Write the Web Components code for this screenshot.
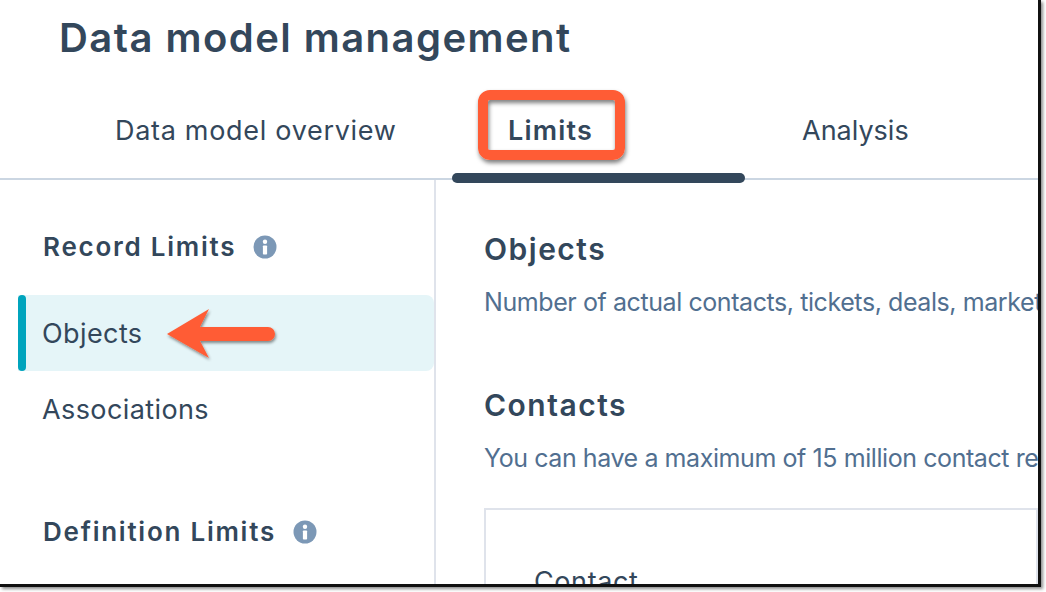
<!DOCTYPE html>
<html lang="en">
<head>
<meta charset="utf-8">
<title>Data model management</title>
<style>
  html, body { margin: 0; background: #fff; }
  body { font-family: "Inter", "Liberation Sans", sans-serif; color: #33475b; }
</style>
</head>
<body>
<data-model-page>
  <h-title slot="title">Data model management</h-title>
  <tab-bar slot="tabs">
    <tab-item style="--w:394px;--ls:0.7px">Data model overview</tab-item>
    <tab-item active style="--w:293px;--ls:1.2px">Limits</tab-item>
    <tab-item style="--w:220px;--ls:0">Analysis</tab-item>
  </tab-bar>
  <side-nav slot="side">
    <nav-heading>Record Limits</nav-heading>
    <nav-item active>Objects</nav-item>
    <nav-item>Associations</nav-item>
    <nav-heading second>Definition Limits</nav-heading>
  </side-nav>
  <limit-section slot="main" heading="Objects">Number of actual contacts, tickets, deals, marketing events, and other records you can have</limit-section>
  <limit-section slot="main" heading="Contacts" second>You can have a maximum of 15 million contact records in your account across all of your teams</limit-section>
  <limit-card slot="main">Contact</limit-card>
</data-model-page>

<script>
// page frame: white sheet with the dark screenshot edge on right and bottom
class DataModelPage extends HTMLElement {
  constructor() {
    super();
    this.attachShadow({ mode: 'open' });
    this.shadowRoot.innerHTML = `
      <style>
        :host { display: block; width: 1046px; height: 592px; }
        .sheet {
          position: relative;
          box-sizing: border-box;
          width: 1041px;
          height: 587px;
          background: #fff;
          border-right: 3px solid #111;
          border-bottom: 3px solid #111;
          box-shadow: 2px 2px 3px rgba(0, 0, 0, 0.45);
          overflow: hidden;
          display: flex;
          flex-direction: column;
        }
        .body { display: flex; flex: 1; min-height: 0; }
        .side { width: 434px; flex: none; border-right: 2px solid #dfe3eb; }
        .main { flex: 1; min-width: 0; padding: 0 0 0 49px; overflow: hidden; }
        .callout {
          position: absolute;
          left: 478px;
          top: 90px;
          width: 147px;
          height: 70px;
          box-sizing: border-box;
          border: 10px solid #ff5c35;
          border-radius: 12px;
          box-shadow: 1px 3px 4px rgba(0, 0, 0, 0.5), inset 1px 3px 4px rgba(0, 0, 0, 0.5);
        }
        .arrow { position: absolute; left: 164px; top: 304px; }
      </style>
      <div class="sheet">
        <slot name="title"></slot>
        <slot name="tabs"></slot>
        <div class="body">
          <div class="side"><slot name="side"></slot></div>
          <div class="main"><slot name="main"></slot></div>
        </div>
        <div class="callout"></div>
        <svg class="arrow" width="116" height="62" viewBox="0 0 116 62">
          <defs>
            <filter id="ds" x="-20%" y="-20%" width="140%" height="150%">
              <feDropShadow dx="1" dy="2" stdDeviation="1.5" flood-color="#000" flood-opacity="0.45"/>
            </filter>
          </defs>
          <path filter="url(#ds)" fill="#ff5c35" d="M3 30 L45 5 L36 23 L104 23 A7 7 0 0 1 104 37 L36 37 L45 54 Z"/>
        </svg>
      </div>`;
  }
}

class HTitle extends HTMLElement {
  constructor() {
    super();
    this.attachShadow({ mode: 'open' });
    this.shadowRoot.innerHTML = `
      <style>
        :host {
          display: block;
          height: 88px;
          padding: 13px 0 0 59px;
          box-sizing: border-box;
          font-size: 40px;
          line-height: 50px;
          font-weight: 600;
          color: #33475b;
          letter-spacing: 1.45px;
        }
      </style>
      <slot></slot>`;
  }
}

class TabBar extends HTMLElement {
  constructor() {
    super();
    this.attachShadow({ mode: 'open' });
    this.shadowRoot.innerHTML = `
      <style>
        :host {
          display: flex;
          height: 92px;
          box-sizing: border-box;
          padding-left: 58px;
          border-bottom: 2px solid #cbd6e2;
        }
      </style>
      <slot></slot>`;
  }
}

class TabItem extends HTMLElement {
  constructor() {
    super();
    this.attachShadow({ mode: 'open' });
    this.shadowRoot.innerHTML = `
      <style>
        :host {
          display: block;
          box-sizing: border-box;
          padding-left: 57px;
          position: relative;
          width: var(--w);
          height: 95px;
          font-size: 27px;
          line-height: 86px;
          letter-spacing: var(--ls);
          color: #33475b;
        }
        :host([active]) { font-weight: 600; padding-left: 56px; }
        :host([active])::after {
          content: '';
          position: absolute;
          left: 0;
          right: 0;
          bottom: 0;
          height: 10px;
          border-radius: 5px;
          background: #33475b;
        }
      </style>
      <slot></slot>`;
  }
}

class SideNav extends HTMLElement {
  constructor() {
    super();
    this.attachShadow({ mode: 'open' });
    this.shadowRoot.innerHTML = `
      <style>
        :host { display: block; padding: 49px 0 0 18px; }
      </style>
      <slot></slot>`;
  }
}

class NavHeading extends HTMLElement {
  constructor() {
    super();
    this.attachShadow({ mode: 'open' });
    this.shadowRoot.innerHTML = `
      <style>
        :host {
          display: flex;
          align-items: center;
          gap: 17px;
          height: 34px;
          margin: 0 0 32px 25px;
          font-size: 26px;
          font-weight: 600;
          letter-spacing: 1.75px;
          color: #33475b;
        }
        :host([second]) { margin-top: 67px; }
        svg { flex: none; position: relative; top: 1px; }
      </style>
      <slot></slot>
      <svg width="24" height="24" viewBox="0 0 24 24">
        <circle cx="12" cy="12" r="11.5" fill="#7c98b6"/>
        <circle cx="12" cy="6.7" r="2.2" fill="#fff"/>
        <rect x="9.9" y="10.5" width="4.2" height="9" rx="0.8" fill="#fff"/>
      </svg>`;
  }
}

class NavItem extends HTMLElement {
  constructor() {
    super();
    this.attachShadow({ mode: 'open' });
    this.shadowRoot.innerHTML = `
      <style>
        :host {
          display: flex;
          align-items: center;
          height: 76px;
          padding-left: 24px;
          position: relative;
          font-size: 27px;
          letter-spacing: 0.4px;
          color: #33475b;
          border-radius: 0 8px 8px 0;
        }
        :host([active]) { background: #e5f5f8; }
        :host([active])::before {
          content: '';
          position: absolute;
          left: 0;
          top: 0;
          bottom: 0;
          width: 8px;
          border-radius: 4px;
          background: #00a4bd;
        }
      </style>
      <slot></slot>`;
  }
}

class LimitSection extends HTMLElement {
  constructor() {
    super();
    this.attachShadow({ mode: 'open' });
    this.shadowRoot.innerHTML = `
      <style>
        :host { display: block; padding-top: 50px; height: 106px; white-space: nowrap; margin-left: -1px; }
        :host([second]) { padding-top: 50px; height: 122px; }
        h2 {
          margin: 0 0 18px;
          font-size: 30px;
          line-height: 38px;
          font-weight: 600;
          letter-spacing: 1.5px;
          color: #33475b;
        }
        p {
          margin: 0;
          font-size: 25px;
          line-height: 32px;
          letter-spacing: -0.42px;
          color: #516f90;
        }
      </style>
      <h2></h2>
      <p><slot></slot></p>`;
    this.shadowRoot.querySelector('h2').textContent = this.getAttribute('heading');
  }
}

class LimitCard extends HTMLElement {
  constructor() {
    super();
    this.attachShadow({ mode: 'open' });
    this.shadowRoot.innerHTML = `
      <style>
        :host {
          display: block;
          box-sizing: border-box;
          height: 200px;
          margin-left: -1px;
          padding: 54px 0 0 48px;
          border: 2px solid #dfe3eb;
          font-size: 27px;
          line-height: 36px;
          letter-spacing: 0.6px;
          color: #33475b;
        }
      </style>
      <slot></slot>`;
  }
}

customElements.define('h-title', HTitle);
customElements.define('tab-bar', TabBar);
customElements.define('tab-item', TabItem);
customElements.define('side-nav', SideNav);
customElements.define('nav-heading', NavHeading);
customElements.define('nav-item', NavItem);
customElements.define('limit-section', LimitSection);
customElements.define('limit-card', LimitCard);
customElements.define('data-model-page', DataModelPage);
</script>
</body>
</html>
